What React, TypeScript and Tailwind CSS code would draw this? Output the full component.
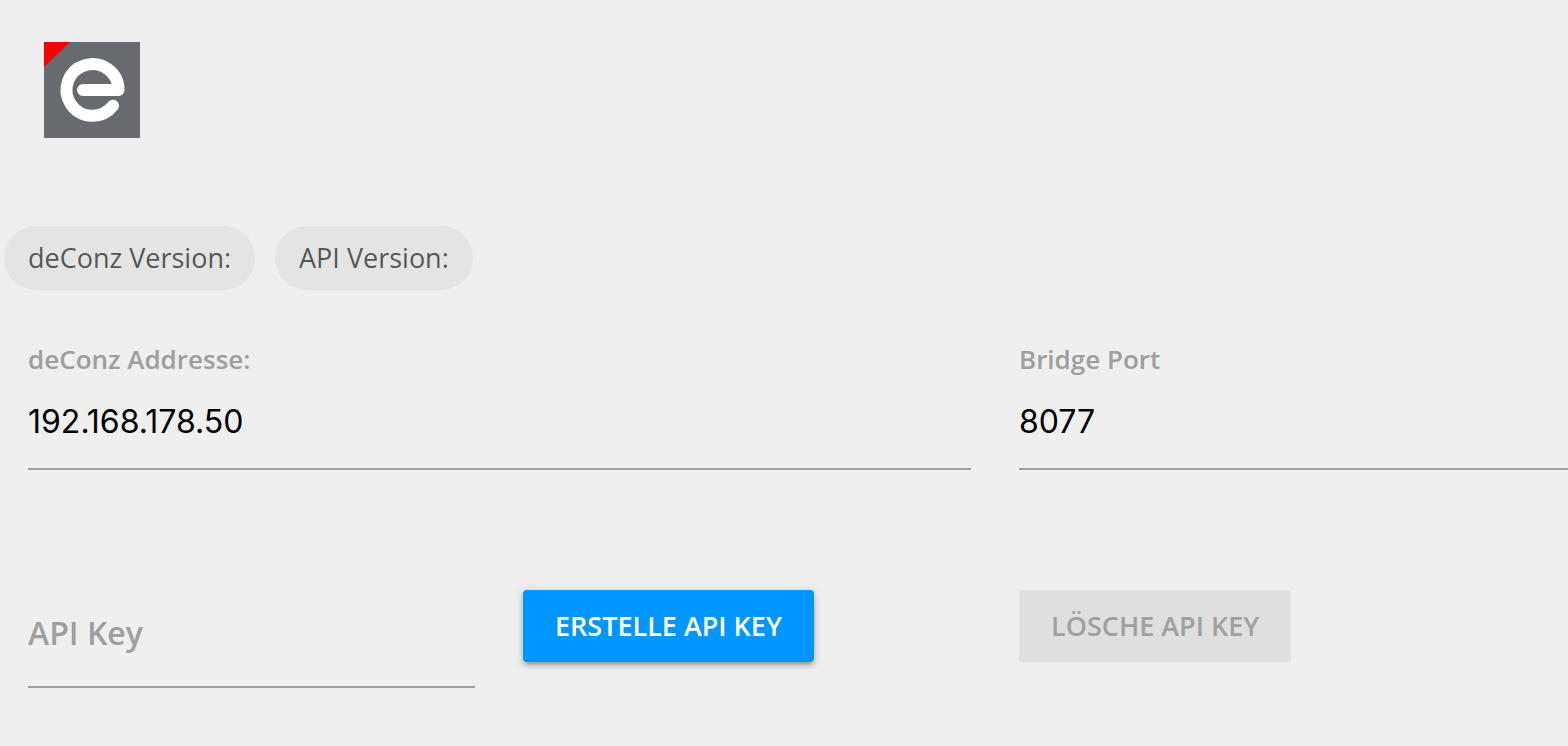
import { FC, ReactNode, useState } from "react";

const Logo: FC = () => {
  return (
    <svg className="h-24 w-24" viewBox="0 0 96 96" role="img" aria-label="deConz">
      <rect width="96" height="96" fill="#676b6f" />
      <path d="M0 0H26L0 25Z" fill="#f90000" />
      <path
        d="M39 48H74.5A26 25.8 0 1 0 69 63.8"
        fill="none"
        stroke="#fff"
        strokeWidth="12"
        strokeLinecap="round"
        strokeLinejoin="round"
      />
    </svg>
  );
};

const Chip: FC<{ children: ReactNode }> = ({ children }) => {
  return (
    <div className="flex h-16 items-center rounded-full bg-[#e4e4e4] px-6 text-[27px] font-medium text-black/65">
      {children}
    </div>
  );
};

interface TextFieldProps {
  id: string;
  label: string;
  value: string;
  onChange: (value: string) => void;
  className?: string;
}

const TextField: FC<TextFieldProps> = ({
  id,
  label,
  value,
  onChange,
  className = "",
}) => {
  return (
    <div className={`min-w-0 ${className}`}>
      <label
        htmlFor={id}
        className="block text-[26px] leading-8 font-semibold text-[#9e9e9e]"
      >
        {label}
      </label>
      <input
        id={id}
        type="text"
        value={value}
        onChange={(e) => onChange(e.target.value)}
        className="block h-[95px] w-full border-b-2 border-[#9e9e9e] bg-transparent font-[Inter,sans-serif] text-[32px] text-black outline-none"
      />
    </div>
  );
};

const App: FC = () => {
  const [address, setAddress] = useState<string>("192.168.178.50");
  const [port, setPort] = useState<string>("8077");
  const [apiKey, setApiKey] = useState<string>("");

  return (
    <main className="min-h-screen bg-[#efefef] font-['Open_Sans',sans-serif]">
      <header className="px-11 pt-[42px]">
        <Logo />
      </header>

      <div className="mt-[88px] flex gap-5 px-1">
        <Chip>deConz Version:</Chip>
        <Chip>API Version:</Chip>
      </div>

      <form onSubmit={(e) => e.preventDefault()} className="pl-7">
        <div className="mt-[53px] grid grid-cols-[447fr_448fr_549fr] gap-x-12">
          <TextField
            id="address"
            label="deConz Addresse:"
            value={address}
            onChange={setAddress}
            className="col-span-2"
          />
          <TextField
            id="port"
            label="Bridge Port"
            value={port}
            onChange={setPort}
          />
        </div>

        <div className="mt-[120px] grid grid-cols-[447fr_448fr_549fr] items-start gap-x-12">
          <input
            type="text"
            aria-label="API Key"
            placeholder="API Key"
            value={apiKey}
            onChange={(e) => setApiKey(e.target.value)}
            className="h-[98px] w-full min-w-0 border-b-2 border-[#9e9e9e] bg-transparent pb-3 text-[32px] font-semibold text-black outline-none placeholder:text-[#9e9e9e]"
          />
          <button
            type="button"
            className="h-[72px] justify-self-start rounded bg-[#0096ff] px-8 text-[27px] font-semibold text-white uppercase shadow-[0_4px_4px_rgba(0,0,0,0.14),0_6px_2px_-4px_rgba(0,0,0,0.12),0_2px_10px_rgba(0,0,0,0.2)]"
          >
            Erstelle API Key
          </button>
          <button
            type="button"
            disabled
            className="h-[72px] justify-self-start rounded bg-[#dfdfdf] px-8 text-[27px] font-semibold text-[#9f9f9f] uppercase"
          >
            Lösche API Key
          </button>
        </div>
      </form>
    </main>
  );
};

export default App;
